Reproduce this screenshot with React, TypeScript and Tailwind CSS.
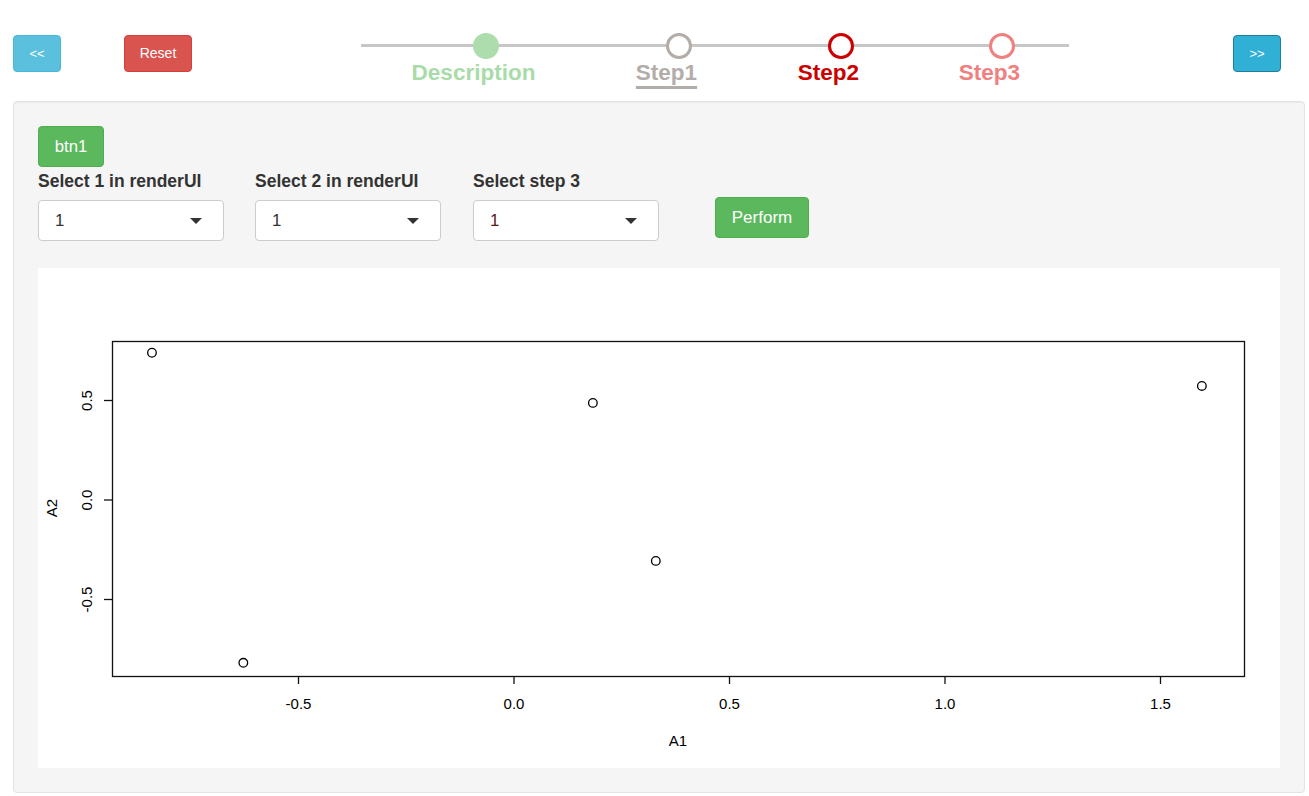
import React from 'react'

const FONT = { fontFamily: '"Liberation Sans", Arial, Helvetica, sans-serif' }

const STEPS = [
  { label: 'Description', w: 'w-[193px]', circle: 'bg-[#addcad]', text: 'text-[#a8dba8]', underline: false },
  { label: 'Step1', w: 'w-[193px]', circle: 'bg-white border-[3px] border-[#b3adaa]', text: 'text-[#b3adaa]', underline: true },
  { label: 'Step2', w: 'w-[131px]', circle: 'bg-white border-[3px] border-[#cc0000]', text: 'text-[#cc0000]', underline: false },
  { label: 'Step3', w: 'w-[191px]', circle: 'bg-white border-[3px] border-[#f08080]', text: 'text-[#f08080]', underline: false },
]

// scatter data in plot units (A1, A2)
const POINTS: [number, number][] = [
  [-0.84, 0.74],
  [0.183, 0.488],
  [1.596, 0.573],
  [0.329, -0.306],
  [-0.628, -0.818],
]

const sx = (v: number) => 476 + 431 * v
const sy = (v: number) => 232 - 199 * v

function Plot() {
  const xt = [-0.5, 0, 0.5, 1, 1.5]
  const yt = [0.5, 0, -0.5]
  return (
    <svg width="1242" height="500" viewBox="0 0 1242 500" style={FONT}>
      <rect x="74.5" y="73.5" width="1132" height="335" fill="none" stroke="#111" strokeWidth="1.3" />
      {xt.map(t => (
        <g key={t}>
          <line x1={sx(t)} x2={sx(t)} y1="408" y2="416" stroke="#111" strokeWidth="1.3" />
          <text x={sx(t)} y="441" fontSize="15" textAnchor="middle" fill="#000">
            {t.toFixed(1)}
          </text>
        </g>
      ))}
      {yt.map(t => (
        <g key={t}>
          <line x1="66" x2="74.5" y1={sy(t)} y2={sy(t)} stroke="#111" strokeWidth="1.3" />
          <text
            x="54"
            y={sy(t)}
            fontSize="15"
            textAnchor="middle"
            fill="#000"
            transform={`rotate(-90 54 ${sy(t)})`}
          >
            {t.toFixed(1)}
          </text>
        </g>
      ))}
      <text x="640" y="478" fontSize="15" textAnchor="middle" fill="#000">A1</text>
      <text x="19" y="240" fontSize="15" textAnchor="middle" fill="#000" transform="rotate(-90 19 240)">A2</text>
      {POINTS.map(([a, b], i) => (
        <circle key={i} cx={sx(a)} cy={sy(b)} r="4.3" fill="none" stroke="#000" strokeWidth="1.3" />
      ))}
    </svg>
  )
}

function SelectBox({ color }: { color: string }) {
  return (
    <div className="mt-[8px] h-[41px] w-[186px] bg-white border border-[#cccccc] rounded-[4px] flex items-center pl-[16px] pr-[21px]">
      <span className={`text-[16.8px] ${color}`}>1</span>
      <span className="ml-auto w-0 h-0 border-l-[6px] border-r-[6px] border-t-[6px] border-l-transparent border-r-transparent border-t-[#333]" />
    </div>
  )
}

export default function App() {
  return (
    <div className="min-h-screen bg-white text-[#333]" style={FONT}>
      {/* header */}
      <div className="flex items-start h-[101px] pt-[33px] pl-[13px]">
        <button className="shrink-0 mt-[2px] w-[48px] h-[37px] rounded-[4px] bg-[#5bc0de] border border-[#46b8da] text-white text-[13px]">
          &lt;&lt;
        </button>
        <button className="shrink-0 ml-[63px] mt-[2px] w-[68px] h-[37px] rounded-[4px] bg-[#d9534f] border border-[#d43f3a] text-white text-[14px]">
          Reset
        </button>
        <div className="shrink-0 ml-[169px] w-[708px] relative">
          <div className="absolute left-0 right-0 top-[11px] h-[3px] bg-[#c6c6c6]" />
          <div className="relative flex pl-[28px]">
            {STEPS.map(s => (
              <div key={s.label} className={`${s.w} shrink-0 flex flex-col items-center`}>
                <div className={`w-[26px] h-[26px] rounded-full box-border ${s.circle}`} />
                <div
                  className={`mt-[3px] -translate-x-3 whitespace-nowrap text-[22.5px] leading-[22px] font-bold ${s.text} ${
                    s.underline ? 'underline decoration-[3px] underline-offset-[6px]' : ''
                  }`}
                >
                  {s.label}
                </div>
              </div>
            ))}
          </div>
        </div>
        <button className="shrink-0 ml-[164px] mt-[2px] w-[48px] h-[37px] rounded-[4px] bg-[#31b0d5] border border-[#1f7e9a] text-white text-[13px]">
          &gt;&gt;
        </button>
      </div>

      {/* panel */}
      <div className="ml-[13px] w-[1292px] bg-[#f5f5f5] border border-[#e3e3e3] rounded-[4px] p-[24px] shadow-[inset_0_1px_1px_rgba(0,0,0,0.05)]">
        <button className="w-[66px] h-[41px] rounded-[4px] bg-[#5cb85c] border border-[#4cae4c] text-white text-[16.8px]">
          btn1
        </button>
        <div className="flex items-start mt-[3px]">
          <div className="w-[186px] shrink-0">
            <div className="text-[17.5px] leading-[22px] font-bold whitespace-nowrap">Select 1 in renderUI</div>
            <SelectBox color="text-[#333]" />
          </div>
          <div className="w-[186px] shrink-0 ml-[31px]">
            <div className="text-[17.5px] leading-[22px] font-bold whitespace-nowrap">Select 2 in renderUI</div>
            <SelectBox color="text-[#333]" />
          </div>
          <div className="w-[186px] shrink-0 ml-[32px]">
            <div className="text-[17.5px] leading-[22px] font-bold whitespace-nowrap">Select step 3</div>
            <SelectBox color="text-[#5a1a1a]" />
          </div>
          <button className="shrink-0 ml-[56px] mt-[27px] w-[94px] h-[41px] rounded-[4px] bg-[#5cb85c] border border-[#4cae4c] text-white text-[17px]">
            Perform
          </button>
        </div>
        <div className="mt-[27px] h-[500px] bg-white">
          <Plot />
        </div>
      </div>
    </div>
  )
}
